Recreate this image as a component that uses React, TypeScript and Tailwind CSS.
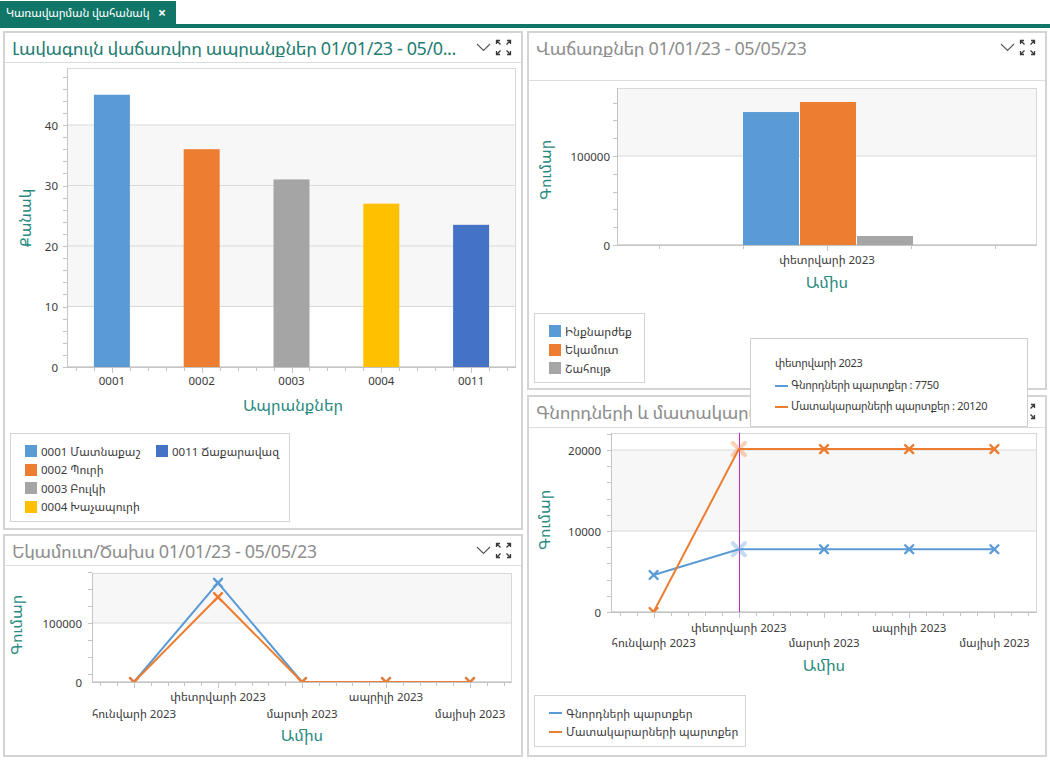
import React from 'react'

const AXIS_TEAL = '#2b8a80'
const LBL = '#3c3c3c'
const GRID = '#d9d9d9'
const BAND = '#f7f7f7'
const BLUE = '#5b9bd5'
const ORANGE = '#ed7d31'
const GRAY = '#a5a5a5'
const YELLOW = '#ffc000'
const NAVY = '#4472c4'
const FS = '11.5'

function ItemIcons() {
  return (
    <div className="flex items-center gap-[4px] mr-[9px] shrink-0">
      <svg width="15" height="9" viewBox="0 0 15 9">
        <path d="M1 1 L7.5 7.5 L14 1" fill="none" stroke="#555" strokeWidth="1.1" />
      </svg>
      <svg width="17" height="17" viewBox="0 0 17 17" fill="none" stroke="#3a3a3a" strokeWidth="1.3">
        <path d="M1.5 5 V1.5 H5 M1.5 1.5 L5.5 5.5" />
        <path d="M12 1.5 H15.5 V5 M15.5 1.5 L11.5 5.5" />
        <path d="M1.5 12 V15.5 H5 M1.5 15.5 L5.5 11.5" />
        <path d="M15.5 12 V15.5 H12 M15.5 15.5 L11.5 11.5" />
      </svg>
    </div>
  )
}

function Panel({ title, active, headH, children }: { title: string; active?: boolean; headH: string; children: React.ReactNode }) {
  return (
    <div className="border-2 border-[#d4d4d4] bg-white flex flex-col h-full overflow-hidden">
      <div className={`${headH} border-b border-[#dcdcdc] flex items-start shrink-0`}>
        <div className="h-[29px] w-full flex items-center">
          <div
            className={`flex-1 pl-[7px] whitespace-nowrap overflow-hidden text-[18px] tracking-[-0.4px] leading-none ${active ? 'text-[#1f7d73]' : 'text-[#8e8e8e]'}`}
          >
            {title}
          </div>
          <ItemIcons />
        </div>
      </div>
      {children}
    </div>
  )
}

function Cross({ x, y, c, s = 4, w = 2.4, o = 1 }: { x: number; y: number; c: string; s?: number; w?: number; o?: number }) {
  return (
    <g stroke={c} strokeWidth={w} opacity={o} strokeLinecap="round">
      <line x1={x - s} y1={y - s} x2={x + s} y2={y + s} />
      <line x1={x - s} y1={y + s} x2={x + s} y2={y - s} />
    </g>
  )
}

type Plot = { l: number; r: number; t: number; b: number }

function Frame({ p, bands, grid, yTicks, xTickCount, centers }: { p: Plot; bands: [number, number][]; grid: number[]; yTicks: number[]; xTickCount: number; centers: number[] }) {
  const step = (p.r - p.l) / xTickCount
  const xt = Array.from({ length: xTickCount }, (_, j) => p.l + (j + 0.5) * step)
  return (
    <g>
      {bands.map(([a, b], i) => (
        <rect key={i} x={p.l} y={a} width={p.r - p.l} height={b - a} fill={BAND} />
      ))}
      {grid.map((g, i) => (
        <line key={i} x1={p.l} x2={p.r} y1={g} y2={g} stroke={GRID} />
      ))}
      <rect x={p.l + 0.5} y={p.t + 0.5} width={p.r - p.l - 1} height={p.b - p.t - 1} fill="none" stroke={GRID} />
      <line x1={p.l + 0.5} x2={p.l + 0.5} y1={p.t} y2={p.b} stroke="#c4c4c4" />
      <line x1={p.l} x2={p.r} y1={p.b + 0.5} y2={p.b + 0.5} stroke="#c4c4c4" />
      {yTicks.map((y, i) => (
        <line key={i} x1={p.l - 4} x2={p.l} y1={Math.round(y) + 0.5} y2={Math.round(y) + 0.5} stroke="#c4c4c4" />
      ))}
      {xt.map((x, i) => {
        const major = centers.some((c) => Math.abs(c - x) < 1)
        return <line key={i} x1={Math.round(x) + 0.5} x2={Math.round(x) + 0.5} y1={p.b} y2={p.b + (major ? 6 : 4)} stroke="#c4c4c4" />
      })}
    </g>
  )
}

function range(from: number, to: number, step: number) {
  const out: number[] = []
  for (let v = from; v <= to + 0.01; v += step) out.push(v)
  return out
}

function TopProductsChart() {
  const p = { l: 62, r: 511, t: 5, b: 304 }
  const k = 6.05
  const y = (v: number) => p.b - v * k
  const cw = (p.r - p.l) / 5
  const cats = ['0001', '0002', '0003', '0004', '0011']
  const vals = [45, 36, 31, 27, 23.5]
  const cols = [BLUE, ORANGE, GRAY, YELLOW, NAVY]
  const centers = cats.map((_, i) => p.l + cw * (i + 0.5))
  return (
    <svg width="516" height="365" className="block">
      <Frame
        p={p}
        bands={[[y(40), y(10)]]}
        grid={[10, 20, 30, 40].map(y)}
        yTicks={range(0, 48, 2).map(y)}
        xTickCount={25}
        centers={centers}
      />
      {vals.map((v, i) => (
        <rect key={i} x={centers[i] - 18} y={y(v)} width={36} height={p.b - y(v)} fill={cols[i]} />
      ))}
      {[0, 10, 20, 30, 40].map((v) => (
        <text key={v} x={53} y={y(v) + 4.5} textAnchor="end" fontSize={FS} fill={LBL}>
          {v}
        </text>
      ))}
      {cats.map((c, i) => (
        <text key={c} x={centers[i]} y={322} textAnchor="middle" fontSize={FS} fill={LBL}>
          {c}
        </text>
      ))}
      <text x={288} y={348} textAnchor="middle" fontSize="16" fill={AXIS_TEAL}>
        Ապրանքներ
      </text>
      <text transform="translate(26 155) rotate(-90)" textAnchor="middle" fontSize="16" fill={AXIS_TEAL}>
        Քանակ
      </text>
    </svg>
  )
}

function SalesChart() {
  const p = { l: 88, r: 508, t: 7, b: 164 }
  const k = 0.00089
  const y = (v: number) => p.b - v * k
  const c = (p.l + p.r) / 2
  return (
    <svg width="516" height="225" className="block">
      <Frame
        p={p}
        bands={[[p.t, y(100000)]]}
        grid={[y(100000)]}
        yTicks={range(0, 170000, 20000).map(y)}
        xTickCount={5}
        centers={[c]}
      />
      <rect x={214} y={y(149400)} width={56} height={p.b - y(149400)} fill={BLUE} />
      <rect x={271} y={y(160700)} width={56} height={p.b - y(160700)} fill={ORANGE} />
      <rect x={328} y={y(10100)} width={56} height={p.b - y(10100)} fill={GRAY} />
      <text x={81} y={y(100000) + 4.5} textAnchor="end" fontSize={FS} fill={LBL}>100000</text>
      <text x={81} y={p.b + 4.5} textAnchor="end" fontSize={FS} fill={LBL}>0</text>
      <text x={c} y={183} textAnchor="middle" fontSize={FS} fill={LBL}>փետրվարի 2023</text>
      <text x={c} y={207} textAnchor="middle" fontSize="16" fill={AXIS_TEAL}>Ամիս</text>
      <text transform="translate(22 89) rotate(-90)" textAnchor="middle" fontSize="16" fill={AXIS_TEAL}>Գումար</text>
    </svg>
  )
}

const MONTHS = ['հունվարի 2023', 'փետրվարի 2023', 'մարտի 2023', 'ապրիլի 2023', 'մայիսի 2023']

function LineChart({
  p, k, w, h, series, grid, bands, yTicks, yLabels, upper, lower, titleY, yTitle, hover, crosshair, clipId,
}: {
  p: Plot; k: number; w: number; h: number
  series: { c: string; v: number[] }[]
  grid: number[]; bands: [number, number][]; yTicks: number[]
  yLabels: { t: string; v: number }[]
  upper: number; lower: number; titleY: number; yTitle: [number, number]
  hover?: number; crosshair?: boolean; clipId: string
}) {
  const y = (v: number) => p.b - v * k
  const cw = (p.r - p.l) / 5
  const centers = MONTHS.map((_, i) => p.l + cw * (i + 0.5))
  return (
    <svg width={w} height={h} className="block">
      <defs>
        <clipPath id={clipId}>
          <rect x={p.l} y={p.t} width={p.r - p.l} height={p.b - p.t} />
        </clipPath>
      </defs>
      <Frame p={p} bands={bands.map(([a, b]) => [y(a), y(b)])} grid={grid.map(y)} yTicks={yTicks} xTickCount={25} centers={centers} />
      {crosshair && hover !== undefined && (
        <line x1={Math.round(centers[hover]) + 0.5} x2={Math.round(centers[hover]) + 0.5} y1={p.t} y2={p.b} stroke="#c02cc0" />
      )}
      <g clipPath={`url(#${clipId})`}>
        {series.map((s, si) => (
          <g key={si}>
            <polyline
              points={s.v.map((v, i) => `${centers[i]},${y(v)}`).join(' ')}
              fill="none"
              stroke={s.c}
              strokeWidth="2"
            />
            {s.v.map((v, i) =>
              hover === i ? (
                <Cross key={i} x={centers[i]} y={y(v)} c={s.c} s={6} w={4} o={0.35} />
              ) : (
                <Cross key={i} x={centers[i]} y={y(v)} c={s.c} />
              ),
            )}
          </g>
        ))}
      </g>
      {yLabels.map((l) => (
        <text key={l.t} x={p.l - 10} y={y(l.v) + 4.5} textAnchor="end" fontSize={FS} fill={LBL}>
          {l.t}
        </text>
      ))}
      {MONTHS.map((m, i) => (
        <text key={m} x={centers[i]} y={(i % 2 ? upper : lower) + 4.5} textAnchor="middle" fontSize={FS} fill={LBL}>
          {m}
        </text>
      ))}
      <text x={(p.l + p.r) / 2} y={titleY + 6} textAnchor="middle" fontSize="16" fill={AXIS_TEAL}>
        Ամիս
      </text>
      <text transform={`translate(${yTitle[0] + 5} ${yTitle[1]}) rotate(-90)`} textAnchor="middle" fontSize="16" fill={AXIS_TEAL}>
        Գումար
      </text>
    </svg>
  )
}

function Swatch({ c }: { c: string }) {
  return <span className="w-[12px] h-[12px] shrink-0" style={{ background: c }} />
}

function Dash({ c }: { c: string }) {
  return <span className="w-[13px] h-[2px] shrink-0" style={{ background: c }} />
}

function LegendItem({ mark, text }: { mark: React.ReactNode; text: string }) {
  return (
    <div className="h-[18.5px] flex items-center gap-[4px] whitespace-nowrap">
      {mark}
      <span>{text}</span>
    </div>
  )
}

export default function App() {
  const lcDebt = { p: { l: 82, r: 508, t: 5, b: 184 }, k: 0.0081 }
  const lcIncome = { p: { l: 87, r: 507, t: 7, b: 116 }, k: 0.00059 }
  return (
    <div className="w-[1050px] h-[761px] bg-white relative overflow-hidden text-[11.5px] text-[#3c3c3c] font-['Noto_Sans_Armenian','Noto_Sans','DejaVu_Sans',sans-serif]">
      {/* tab strip */}
      <div className="h-[24px] flex items-end">
        <div className="h-[23px] w-[176px] bg-[#0f7668] text-white flex items-center pl-[6px] whitespace-nowrap">
          <span className="w-[152px] text-[11.5px] tracking-[-0.2px] leading-none">Կառավարման վահանակ</span>
          <span className="text-[14px] leading-none font-bold">×</span>
        </div>
      </div>
      <div className="h-[4px] bg-[#0f7668]" />

      <div className="flex gap-[4px] px-[3px] pt-[3px]">
        {/* left column */}
        <div className="w-[520px] flex flex-col gap-[4px]">
          <div className="h-[499px]">
            <Panel title="Լավագույն վաճառվող ապրանքներ 01/01/23 - 05/0..." active headH="h-[30px]">
              <TopProductsChart />
              <div className="ml-[5px] mt-[5px] w-[280px] h-[89px] border border-[#d4d4d4] pt-[8px] pl-[14px] flex gap-[26px]">
                <div className="w-[105px]">
                  <LegendItem mark={<Swatch c={BLUE} />} text="0001 Մատնաքաշ" />
                  <LegendItem mark={<Swatch c={ORANGE} />} text="0002 Պուրի" />
                  <LegendItem mark={<Swatch c={GRAY} />} text="0003 Բուլկի" />
                  <LegendItem mark={<Swatch c={YELLOW} />} text="0004 Խաչապուրի" />
                </div>
                <div>
                  <LegendItem mark={<Swatch c={NAVY} />} text="0011 Ճաքարավազ" />
                </div>
              </div>
            </Panel>
          </div>
          <div className="h-[223px]">
            <Panel title="Եկամուտ/Ծախս 01/01/23 - 05/05/23" headH="h-[30px]">
              <LineChart
                clipId="c1"
                p={lcIncome.p}
                k={lcIncome.k}
                w={516}
                h={189}
                series={[
                  { c: BLUE, v: [0, 168000, 0, 0, 0] },
                  { c: ORANGE, v: [0, 144000, 0, 0, 0] },
                ]}
                grid={[100000]}
                bands={[[185000, 100000]]}
                yTicks={range(lcIncome.p.b - 59 - 16.86 * 3, lcIncome.p.b, 16.86).filter((v) => v > lcIncome.p.t - 1)}
                yLabels={[
                  { t: '100000', v: 100000 },
                  { t: '0', v: 0 },
                ]}
                upper={130}
                lower={147}
                titleY={169}
                yTitle={[12, 59]}
              />
            </Panel>
          </div>
        </div>

        {/* right column */}
        <div className="w-[520px] flex flex-col gap-[5px]">
          <div className="h-[359px]">
            <Panel title="Վաճառքներ 01/01/23 - 05/05/23" headH="h-[48px]">
              <SalesChart />
              <div className="ml-[5px] mt-[7px] w-[111px] h-[70px] border border-[#d4d4d4] pt-[8px] pl-[14px]">
                <LegendItem mark={<Swatch c={BLUE} />} text="Ինքնարժեք" />
                <LegendItem mark={<Swatch c={ORANGE} />} text="Եկամուտ" />
                <LegendItem mark={<Swatch c={GRAY} />} text="Շահույթ" />
              </div>
            </Panel>
          </div>
          <div className="h-[362px]">
            <Panel title="Գնորդների և մատակարարների պարտքեր 01/01/23 - 05/05/23" headH="h-[31px]">
              <LineChart
                clipId="c2"
                p={lcDebt.p}
                k={lcDebt.k}
                w={516}
                h={250}
                series={[
                  { c: BLUE, v: [4570, 7750, 7750, 7750, 7750] },
                  { c: ORANGE, v: [0, 20120, 20120, 20120, 20120] },
                ]}
                grid={[10000, 20000]}
                bands={[[20000, 10000]]}
                yTicks={range(0, 22000, 2000).map((v) => lcDebt.p.b - v * lcDebt.k)}
                yLabels={[
                  { t: '20000', v: 20000 },
                  { t: '10000', v: 10000 },
                  { t: '0', v: 0 },
                ]}
                upper={199}
                lower={214}
                titleY={237}
                yTitle={[16, 92]}
                hover={1}
                crosshair
              />
              <div className="ml-[5px] mt-[17px] w-[212px] h-[52px] border border-[#d4d4d4] pt-[8px] pl-[14px]">
                <LegendItem mark={<Dash c={BLUE} />} text="Գնորդների պարտքեր" />
                <LegendItem mark={<Dash c={ORANGE} />} text="Մատակարարների պարտքեր" />
              </div>
            </Panel>
          </div>
        </div>
      </div>

      {/* crosshair tooltip */}
      <div className="absolute left-[750px] top-[338px] w-[278px] h-[89px] bg-white border border-[#cfcfcf] pl-[24px] pt-[15px] text-[11px] tracking-[-0.3px]">
        <div className="h-[18px] flex items-center">փետրվարի 2023</div>
        <div className="mt-[3px] h-[21px] flex items-center gap-[3px]">
          <span className="w-[13px] h-[2px] bg-[#5b9bd5]" />
          <span>Գնորդների պարտքեր : 7750</span>
        </div>
        <div className="h-[21px] flex items-center gap-[3px]">
          <span className="w-[13px] h-[2px] bg-[#ed7d31]" />
          <span>Մատակարարների պարտքեր : 20120</span>
        </div>
      </div>
    </div>
  )
}
